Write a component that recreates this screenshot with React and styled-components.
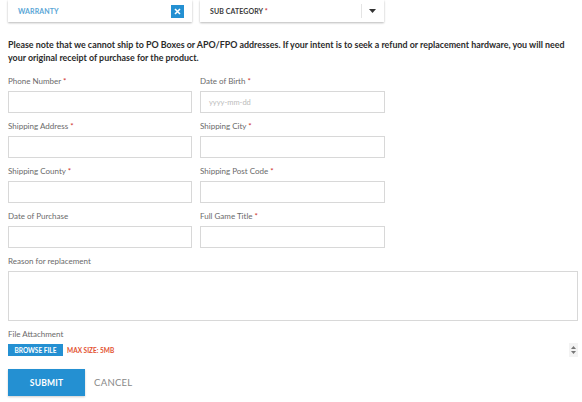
import React from "react";
import styled, { createGlobalStyle } from "styled-components";

const Global = createGlobalStyle`
  html, body { margin: 0; padding: 0; background: #fff; }
  body { font-family: Lato, "Open Sans", Arial, sans-serif; color: #333; }
  * { box-sizing: border-box; }
`;

const Page = styled.div`
  width: 582px;
  height: 402px;
  padding: 0 4px 0 8px;
  overflow: hidden;
`;

const TopRow = styled.div`
  display: grid;
  grid-template-columns: 184px 184px;
  column-gap: 8px;
`;

const Card = styled.div`
  height: 22px;
  background: #fff;
  box-shadow: 0 1px 2px rgba(0, 0, 0, 0.28);
  display: flex;
  align-items: center;
  padding: 0 8px 0 10px;
`;

const CardText = styled.span`
  flex: 1;
  font-size: 7px;
  font-weight: 700;
  letter-spacing: 0.1px;
  text-transform: uppercase;
  color: ${(p) => (p.$accent ? "#5aa6d6" : "#3a3a3a")};
`;

const Req = styled.span`
  color: #d0312d;
`;

const ClearBtn = styled.span`
  width: 13px;
  height: 13px;
  background: #2490d2;
  display: flex;
  align-items: center;
  justify-content: center;
`;

const Divider = styled.span`
  width: 1px;
  height: 14px;
  background: #e4e4e4;
  margin-right: 7px;
`;

const Notice = styled.p`
  margin: 16px 0 12px;
  font-size: 8.9px;
  font-weight: 700;
  line-height: 13px;
  color: #2b2b2b;
`;

const Grid = styled.div`
  display: grid;
  grid-template-columns: 184px 185px;
  column-gap: 8px;
`;

const Field = styled.div`
  display: flex;
  flex-direction: column;
  margin-bottom: ${(p) => (p.$last ? "0" : "8px")};
  grid-column: ${(p) => (p.$full ? "1 / -1" : "auto")};
`;

const Label = styled.label`
  font-size: 8px;
  line-height: 11px;
  color: #6a6a6a;
  margin-bottom: 4px;
`;

const Input = styled.div`
  height: 22px;
  border: 1px solid #d8d8d8;
  background: #fff;
  display: flex;
  align-items: center;
  padding-left: 8px;
  font-size: 7.5px;
  color: #bbb;
`;

const TextArea = styled.div`
  width: 570px;
  height: 50px;
  border: 1px solid #d8d8d8;
  background: #fff;
`;

const FileRow = styled.div`
  display: flex;
  align-items: center;
  width: 570px;
  margin-top: -1px;
`;

const BrowseBtn = styled.span`
  height: 12px;
  width: 55px;
  background: #2490d2;
  color: #fff;
  font-size: 6.5px;
  font-weight: 700;
  display: flex;
  align-items: center;
  justify-content: center;
`;

const MaxSize = styled.span`
  flex: 1;
  margin-left: 4px;
  font-size: 6.5px;
  font-weight: 700;
  color: #e2502e;
`;

const Spinner = styled.span`
  width: 9px;
  height: 14px;
  background: #f3f3f3;
  display: flex;
  flex-direction: column;
  align-items: center;
  justify-content: space-around;
  padding: 2px 0;
`;

const Actions = styled.div`
  display: flex;
  align-items: center;
  margin-top: 12px;
`;

const Submit = styled.button`
  width: 77px;
  height: 27px;
  border: none;
  background: #2490d2;
  color: #fff;
  font-family: inherit;
  font-size: 8.5px;
  font-weight: 700;
  letter-spacing: 0.2px;
  padding: 0;
  box-shadow: 0 1px 2px rgba(0,0,0,0.2);
`;

const Cancel = styled.span`
  margin-left: 9px;
  font-size: 9.5px;
  letter-spacing: 0.3px;
  color: #888;
`;

const fields = [
  ["Phone Number", true, ""],
  ["Date of Birth", true, "yyyy-mm-dd"],
  ["Shipping Address", true, ""],
  ["Shipping City", true, ""],
  ["Shipping County", true, ""],
  ["Shipping Post Code", true, ""],
  ["Date of Purchase", false, ""],
  ["Full Game Title", true, ""],
];

export default function App() {
  return (
    <Page>
      <Global />
      <TopRow>
        <Card>
          <CardText $accent>Warranty</CardText>
          <ClearBtn>
            <svg width="7" height="7" viewBox="0 0 7 7">
              <path d="M1 1L6 6M6 1L1 6" stroke="#fff" strokeWidth="1.6" />
            </svg>
          </ClearBtn>
        </Card>
        <Card>
          <CardText>
            Sub Category <Req>*</Req>
          </CardText>
          <Divider />
          <svg width="7" height="4" viewBox="0 0 7 4">
            <path d="M0 0H7L3.5 4Z" fill="#333" />
          </svg>
        </Card>
      </TopRow>
      <Notice>
        Please note that we cannot ship to PO Boxes or APO/FPO addresses. If your intent is to seek a refund or replacement hardware, you will need your original receipt of purchase for the product.
      </Notice>
      <Grid>
        {fields.map(([label, req, ph]) => (
          <Field key={label}>
            <Label>
              {label}
              {req && <Req> *</Req>}
            </Label>
            <Input>{ph}</Input>
          </Field>
        ))}
        <Field $full>
          <Label>Reason for replacement</Label>
          <TextArea />
        </Field>
        <Field $full $last>
          <Label>File Attachment</Label>
          <FileRow>
            <BrowseBtn>BROWSE FILE</BrowseBtn>
            <MaxSize>MAX SIZE: 5MB</MaxSize>
            <Spinner>
              <svg width="5" height="3" viewBox="0 0 5 3"><path d="M0 3H5L2.5 0Z" fill="#777" /></svg>
              <svg width="5" height="3" viewBox="0 0 5 3"><path d="M0 0H5L2.5 3Z" fill="#777" /></svg>
            </Spinner>
          </FileRow>
        </Field>
      </Grid>
      <Actions>
        <Submit>SUBMIT</Submit>
        <Cancel>CANCEL</Cancel>
      </Actions>
    </Page>
  );
}
